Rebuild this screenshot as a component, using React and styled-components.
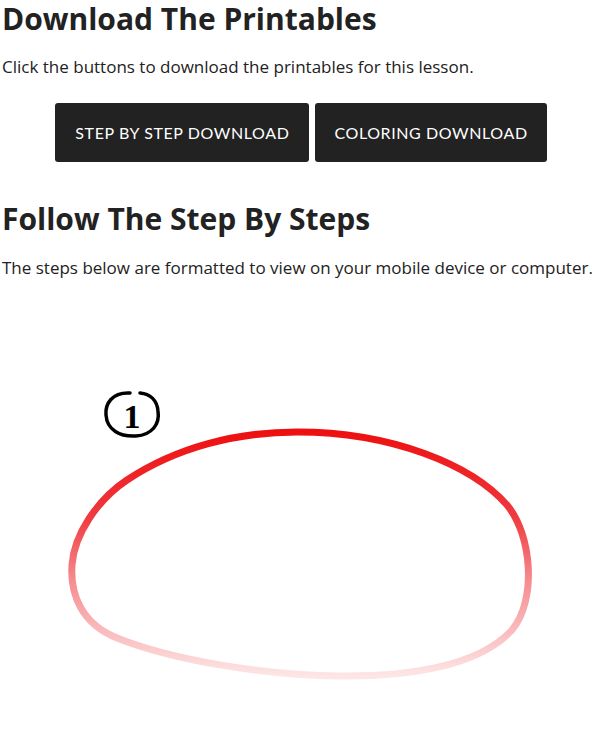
import styled, { createGlobalStyle } from 'styled-components';

const GlobalStyle = createGlobalStyle`
    body {
        margin: 0;
        background: #fff;
        font-family: "Open Sans", "Liberation Sans", sans-serif;
        color: #222;
    }
`;

const SPage = styled.div`
    padding: 0 2px;
`;

const SHeading = styled.h2`
    margin: 0;
    padding-top: ${props => props.first ? '2px' : '40px'};
    font-size: 30px;
    line-height: 34px;
    font-weight: 700;
    color: #222;
`;

const SText = styled.p`
    margin: ${props => props.tight ? '19px' : '18px'} 0 0;
    font-size: 17px;
    line-height: 26px;
    color: #222;
`;

const SButtons = styled.div`
    display: flex;
    justify-content: center;
    gap: 6px;
    margin-top: 23px;
    padding-left: 4px;
`;

const SButton = styled.a`
    display: flex;
    align-items: center;
    justify-content: center;
    height: 59px;
    padding: 0 ${props => props.wide ? '20px' : '19px'};
    background: #222;
    border-radius: 3px;
    color: #fff;
    font-family: "Lato", "Liberation Sans", sans-serif;
    font-size: 16px;
    letter-spacing: 0.6px;
    text-transform: uppercase;
    text-decoration: none;
    cursor: pointer;
`;

const SStep = styled.div`
    margin-top: 19px;
    height: 450px;
`;

const StepOne = () => (
    <svg width="598" height="450" viewBox="0 300 598 450">
        <defs>
            <linearGradient id="ovalGrad" x1="0" y1="0" x2="0" y2="1">
                <stop offset="0" stopColor="#ee1010" />
                <stop offset="0.35" stopColor="#ef3a40" />
                <stop offset="0.6" stopColor="#f58a8e" />
                <stop offset="1" stopColor="#fde6e6" />
            </linearGradient>
        </defs>
        <path
            d="M 128 393 C 110 392 103 404 104 415 C 105 430 118 437 134 436 C 150 435 158 424 156 411 C 155 400 148 394 138 393"
            fill="none"
            stroke="#000"
            strokeWidth="3.5"
            strokeLinecap="round"
        />
        <text x="130" y="428" textAnchor="middle" fontFamily="'Liberation Serif', serif" fontWeight="700" fontSize="34" fill="#000">1</text>
        <path
            d="M 295 432 C 390 432 470 465 505 505 C 530 535 535 600 510 630 C 475 668 400 677 337 676 C 260 675 170 660 115 638 C 80 624 68 595 70 565 C 72 535 95 500 125 480 C 175 447 235 432 295 432 Z"
            fill="none"
            stroke="url(#ovalGrad)"
            strokeWidth="7"
        />
    </svg>
);

export default function App() {
    return (
        <>
            <GlobalStyle />
            <SPage>
                <SHeading first>Download The Printables</SHeading>
                <SText>Click the buttons to download the printables for this lesson.</SText>
                <SButtons>
                    <SButton wide>Step by Step Download</SButton>
                    <SButton>Coloring Download</SButton>
                </SButtons>
                <SHeading>Follow The Step By Steps</SHeading>
                <SText tight>The steps below are formatted to view on your mobile device or computer.</SText>
                <SStep>
                    <StepOne />
                </SStep>
            </SPage>
        </>
    );
}
